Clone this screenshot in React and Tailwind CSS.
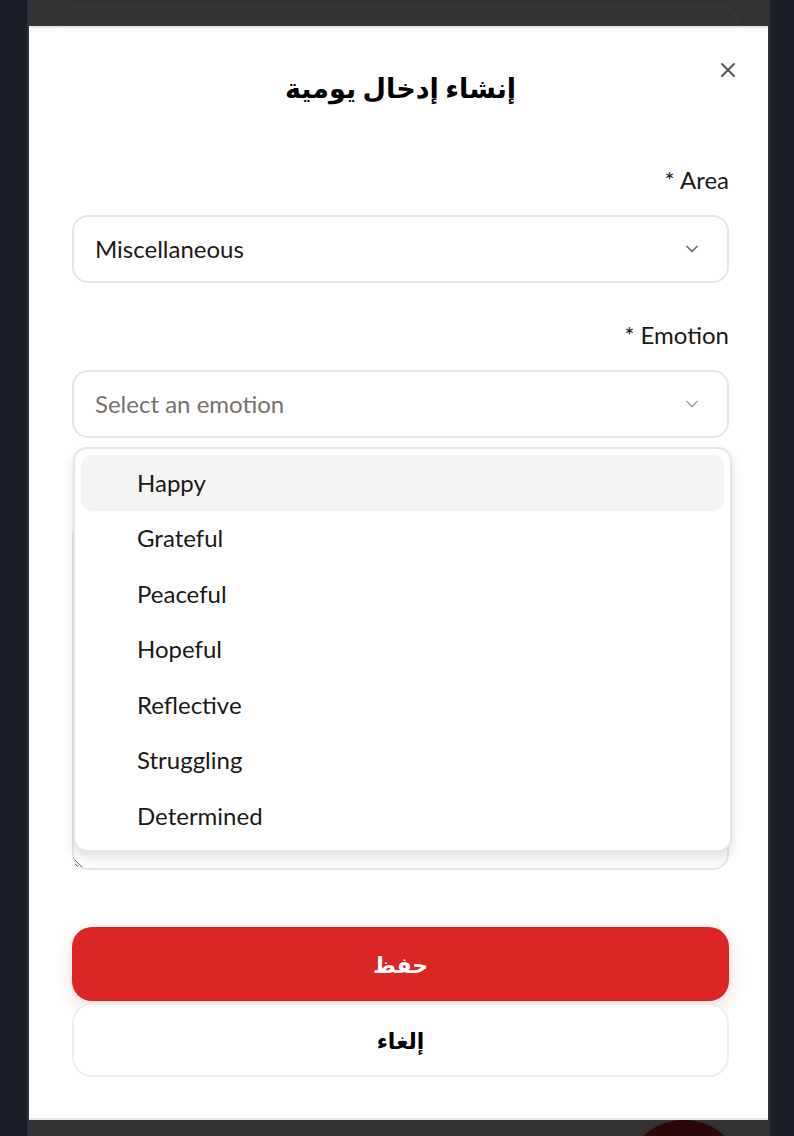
import React, { useState } from "react";
import { X, ChevronDown } from "lucide-react";

const EMOTIONS = [
  "Happy",
  "Grateful",
  "Peaceful",
  "Hopeful",
  "Reflective",
  "Struggling",
  "Determined",
];

function Field({ label, children }) {
  return (
    <div className="flex flex-col">
      <div className="flex justify-end h-[30px] items-center text-[24px] text-[#1c1917]">
        * {label}
      </div>
      <div className="mt-[20px]">{children}</div>
    </div>
  );
}

export default function App() {
  const [hovered, setHovered] = useState(0);

  return (
    <div
      className="h-[1136px] w-full bg-[#1b1e27] pl-[27px] overflow-hidden"
      style={{ fontFamily: "Lato, 'DejaVu Sans', sans-serif" }}
    >
      <div className="w-[743px] h-full border-x-2 border-[#2e3140] bg-[#333333] flex flex-col">
        {/* page behind the overlay */}
        <div className="h-[26px] px-[28px] pt-[6px] overflow-hidden">
          <div className="h-[40px] rounded-[22px] border border-[#3c3c3c] bg-[#343434]" />
        </div>

        {/* modal */}
        <div className="relative bg-white border-y-2 border-[#e4e4e4] pt-[44px] pl-[43px] pr-[39px] pb-[41px]">
          <button className="absolute right-[28px] top-[30px] w-[24px] h-[24px] flex items-center justify-center text-[#555]">
            <X size={24} strokeWidth={2} />
          </button>

          <h1 className="text-center text-[27px] leading-[32px] font-bold text-black">
            إنشاء إدخال يومية
          </h1>

          <div className="mt-[61px] flex flex-col gap-[37px]">
            <Field label="Area">
              <div className="h-[68px] rounded-[16px] border-2 border-[#e7e5e4] flex items-center justify-between pl-[21px] pr-[25px] text-[24px] text-[#1c1917]">
                <span>Miscellaneous</span>
                <ChevronDown size={20} className="text-[#6b6b6b]" strokeWidth={2} />
              </div>
            </Field>

            <div className="relative">
              <Field label="Emotion">
                <div className="h-[68px] rounded-[16px] border-2 border-[#e7e5e4] flex items-center justify-between pl-[21px] pr-[25px] text-[24px] text-[#78716c]">
                  <span>Select an emotion</span>
                  <ChevronDown size={20} className="text-[#a8a29e]" strokeWidth={2} />
                </div>
              </Field>

              <div className="mt-[30px] flex flex-col">
                <div className="flex justify-end h-[30px] items-center text-[24px] text-[#1c1917]">
                  * Notes
                </div>
                <textarea
                  dir="rtl"
                  rows={6}
                  className="mt-[20px] h-[352px] rounded-[16px] border-2 border-[#e7e5e4] p-4 text-[20px] outline-none"
                />
              </div>

              {/* open dropdown */}
              <div className="absolute left-[1px] right-[-3px] top-[127px] z-10 rounded-[14px] border-2 border-[#e7e5e4] bg-white shadow-[0_6px_12px_rgba(0,0,0,0.12)] p-[6px]">
                {EMOTIONS.map((e, i) => (
                  <div
                    key={e}
                    onMouseEnter={() => setHovered(i)}
                    className={
                      "h-[55.5px] rounded-[11px] flex items-center pl-[56px] text-[24px] text-[#1c1917] " +
                      (hovered === i ? "bg-[#f4f4f3]" : "")
                    }
                  >
                    {e}
                  </div>
                ))}
              </div>
            </div>
          </div>

          <div className="mt-[57px] flex flex-col gap-[2px]">
            <button className="h-[74px] rounded-[20px] bg-[#dc2626] text-white text-[22px] font-bold shadow-[0_6px_18px_rgba(220,38,38,0.18)]">
              حفظ
            </button>
            <button className="h-[74px] rounded-[20px] bg-white border-2 border-[#eeeeee] text-black text-[22px] font-bold">
              إلغاء
            </button>
          </div>
        </div>

        {/* bottom strip with dimmed FAB */}
        <div className="flex-1 relative overflow-hidden">
          <div className="absolute right-[24px] top-0 w-[120px] h-[120px] rounded-full bg-[#2d0707]" />
        </div>
      </div>
    </div>
  );
}
